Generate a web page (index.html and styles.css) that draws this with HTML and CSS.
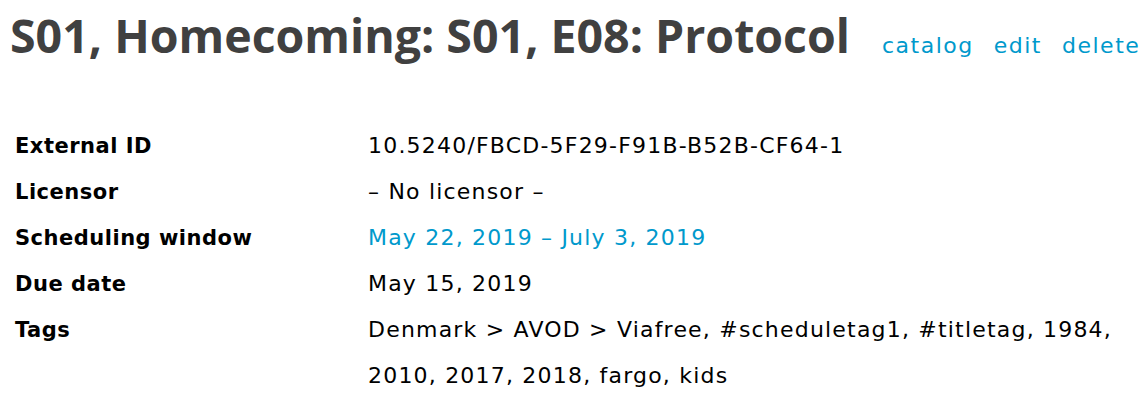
FILE: index.html
```html
<!DOCTYPE html>
<html>
<head>
<meta charset="utf-8">
<link rel="stylesheet" href="styles.css">
</head>
<body>
<div class="page">
  <header class="head">
    <h1 class="title">S01, Homecoming: S01, E08: Protocol</h1>
    <nav class="actions">
      <a class="link" href="#">catalog</a>
      <a class="link" href="#">edit</a>
      <a class="link" href="#">delete</a>
    </nav>
  </header>
  <dl class="details">
    <dt class="label">External ID</dt>
    <dd class="value">10.5240/FBCD-5F29-F91B-B52B-CF64-1</dd>
    <dt class="label">Licensor</dt>
    <dd class="value">– No licensor –</dd>
    <dt class="label">Scheduling window</dt>
    <dd class="value"><a class="link" href="#">May 22, 2019 – July 3, 2019</a></dd>
    <dt class="label">Due date</dt>
    <dd class="value">May 15, 2019</dd>
    <dt class="label">Tags</dt>
    <dd class="value">Denmark &gt; AVOD &gt; Viafree, #scheduletag1, #titletag, 1984, 2010, 2017, 2018, fargo, kids</dd>
  </dl>
</div>
</body>
</html>
```
FILE: styles.css
```css
html, body {
  margin: 0;
  padding: 0;
  background: #fff;
}
.page {
  padding: 5px 0 0 15px;
  font-family: "DejaVu Sans", sans-serif;
  color: #000;
}
.head {
  display: flex;
  align-items: baseline;
  gap: 32px;
}
.title {
  margin: 0 0 0 -5px;
  font-family: "Open Sans", sans-serif;
  font-weight: 700;
  font-size: 46.5px;
  line-height: 60px;
  color: #404040;
}
.actions {
  display: flex;
  gap: 20px;
  font-size: 22px;
  letter-spacing: 1.5px;
}
.link {
  color: #0099cc;
  text-decoration: none;
}
.details {
  display: grid;
  grid-template-columns: 353px 780px;
  margin: 58px 0 0 0;
  line-height: 46px;
}
.label {
  font-weight: 700;
  font-size: 21px;
  letter-spacing: 0.5px;
}
.value {
  margin: 0;
  width: 760px;
  font-size: 22px;
  letter-spacing: 1.2px;
}
```
